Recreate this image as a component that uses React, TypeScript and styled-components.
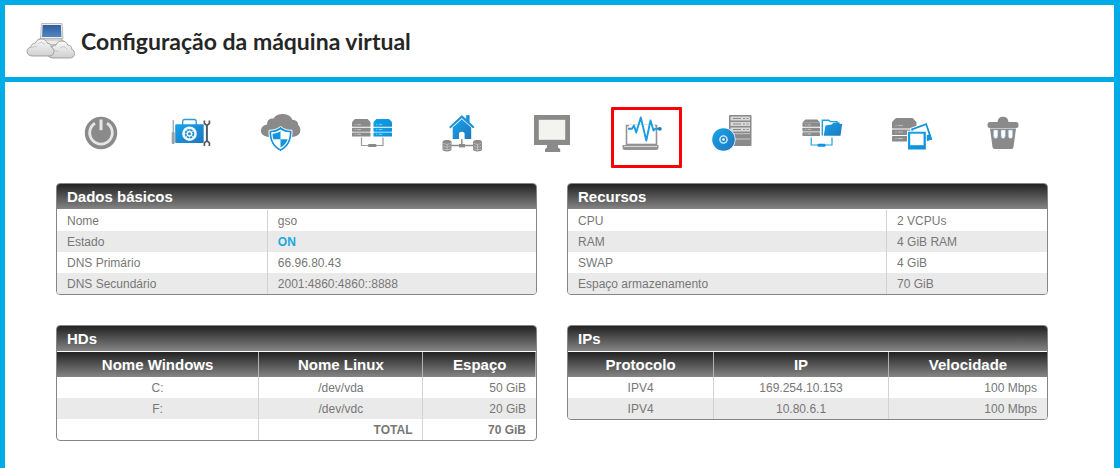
import React from 'react';
import styled, { createGlobalStyle } from 'styled-components';

const blue = '#00ace6';
const gray = '#8a8a8a';

const GlobalStyle = createGlobalStyle`
  *, *::before, *::after { box-sizing: border-box; }
  body {
    margin: 0;
    background: #fff;
    color: #777;
    font-family: "Liberation Sans", Arial, sans-serif;
    font-size: 12px;
  }
`;

const Page = styled.div`
  min-height: 100vh;
  border: solid ${blue};
  border-width: 5px 6px 0 5px;
`;

const Header = styled.header`
  display: flex;
  align-items: center;
  gap: 4px;
  height: 77px;
  padding: 0 20px;
  border-bottom: 5px solid ${blue};
`;

const Title = styled.h1`
  margin: 0;
  color: #262626;
  font-family: Lato, "Liberation Sans", sans-serif;
  font-size: 23px;
  font-weight: 700;
  line-height: 32px;
`;

const Content = styled.main`
  display: flex;
  flex-direction: column;
  gap: 30px;
  padding: 31px 66px 20px 51px;
`;

const Toolbar = styled.nav`
  display: grid;
  grid-template-columns: repeat(11, 1fr);
  justify-items: center;
`;

const ToolButton = styled.button`
  position: relative;
  width: 40px;
  height: 40px;
  padding: 0;
  border: 0;
  background: none;
  cursor: pointer;
`;

const Highlight = styled.span`
  position: absolute;
  top: -6px;
  left: -11px;
  width: 71px;
  height: 61px;
  border: 3px solid #fb0007;
  border-radius: 1px;
  pointer-events: none;
`;

const Icon = styled.svg`
  display: block;
  overflow: visible;
`;

const Gradients = styled.svg`
  position: absolute;
`;

const Panels = styled.div`
  display: grid;
  grid-template-columns: repeat(2, 1fr);
  align-items: start;
  gap: 30px;
`;

const Panel = styled.section`
  overflow: hidden;
  border: 1px solid #858585;
  border-radius: 4px;
`;

const PanelTitle = styled.h2`
  margin: 0;
  padding: 0 10px;
  border-bottom: 1px solid #fff;
  background: linear-gradient(#222, #858585) padding-box;
  color: #fff;
  font-size: 15px;
  font-weight: 700;
  line-height: 25px;
`;

const Table = styled.table`
  width: 100%;
  border-collapse: separate;
  border-spacing: 0;
  table-layout: fixed;
`;

const Row = styled.tr`
  height: 21px;
  &:nth-child(even) { background: #eaeaea; }
`;

const Cell = styled.td<{ $align?: string; $strong?: boolean; $on?: boolean }>`
  padding: 2px 10px 0;
  border-left: 1px solid #d2d2d2;
  color: ${p => (p.$on ? '#1ba8e0' : '#777')};
  font-weight: ${p => (p.$strong || p.$on ? 700 : 400)};
  line-height: 19px;
  text-align: ${p => p.$align || 'left'};
  &:first-child { border-left: 0; }
`;

const HeadRow = styled.tr`
  background: linear-gradient(#222, #858585);
`;

const HeadCell = styled.th`
  padding: 0 10px;
  border-left: 1px solid #b4b4b4;
  color: #fff;
  font-size: 15px;
  line-height: 25px;
  text-align: center;
  &:first-child { border-left: 0; }
`;

const RowLabel = styled(Cell).attrs({ as: 'th', scope: 'row' })``;

type Pair = { label: string; value: string; on?: boolean };

function FactsPanel({ title, split, rows }: { title: string; split: string; rows: Pair[] }) {
  return (
    <Panel aria-label={title}>
      <PanelTitle>{title}</PanelTitle>
      <Table>
        <colgroup>
          <col width={split} />
          <col />
        </colgroup>
        <tbody>
          {rows.map(r => (
            <Row key={r.label}>
              <RowLabel>{r.label}</RowLabel>
              <Cell $on={r.on}>{r.value}</Cell>
            </Row>
          ))}
        </tbody>
      </Table>
    </Panel>
  );
}

type GridProps = { title: string; heads: string[]; widths: string[]; rows: string[][]; total?: string };

function GridPanel({ title, heads, widths, rows, total }: GridProps) {
  return (
    <Panel aria-label={title}>
      <PanelTitle>{title}</PanelTitle>
      <Table>
        <colgroup>
          {widths.map((w, i) => <col key={i} width={w} />)}
          <col />
        </colgroup>
        <thead>
          <HeadRow>
            {heads.map(h => <HeadCell key={h} scope="col">{h}</HeadCell>)}
          </HeadRow>
        </thead>
        <tbody>
          {rows.map(r => (
            <Row key={r.join()}>
              <Cell $align="center">{r[0]}</Cell>
              <Cell $align="center">{r[1]}</Cell>
              <Cell $align="right">{r[2]}</Cell>
            </Row>
          ))}
          {total && (
            <Row>
              <Cell />
              <Cell $align="right" $strong>TOTAL</Cell>
              <Cell $align="right" $strong>{total}</Cell>
            </Row>
          )}
        </tbody>
      </Table>
    </Panel>
  );
}

function Stack({ x, y, w, h, fill }: { x: number; y: number; w: number; h: number; fill: string }) {
  const top = h * 0.17;
  const unit = (h - top) / 3;
  return (
    <g transform={`translate(${x} ${y})`} fill={fill}>
      <path d={`M${w * 0.16} 0H${w * 0.84}L${w} ${top}H0Z`} />
      {[0, 1, 2].map(i => (
        <g key={i}>
          <rect x="0" y={top + i * unit + (i ? 0.9 : 0)} width={w} height={unit - (i ? 0.9 : 0)} rx="0.6" />
          <path d={`M${w * 0.14} ${top + (i + 0.55) * unit}h1.2m1.4 0h${w * 0.2}`} stroke="#fff" strokeOpacity="0.6" strokeWidth="0.8" />
        </g>
      ))}
    </g>
  );
}

function Drum({ x }: { x: number }) {
  return (
    <g transform={`translate(${x} 27)`}>
      <path d="M0 2C0-.6 9-.6 9 2V9.500C9 12 0 12 0 9.500Z" fill={gray} />
      <path d="M.5 3.200C2 4.600 7 4.600 8.500 3.200M.5 6C2 7.400 7 7.400 8.500 6M.5 8.600C2 10 7 10 8.500 8.600M4.500 4V10.500" fill="none" stroke="#d8d8d8" strokeWidth=".6" />
    </g>
  );
}

const tools: { label: string; active?: boolean; art: React.ReactNode }[] = [
  {
    label: 'Ligar ou desligar',
    art: (
      <>
        <circle cx="20" cy="20" r="16.200" fill={gray} />
        <path d="M14 10.200A11.300 11.300 0 1 0 26 10.200" fill="none" stroke="#e6e6e6" strokeWidth="2.800" />
        <path d="M20 6.500V17.200" stroke="#e6e6e6" strokeWidth="3" />
      </>
    ),
  },
  {
    label: 'Ferramentas',
    art: (
      <g transform="translate(-1.300 0)">
        <path d="M13 12V8.500Q13 6.500 15 6.500H24.500Q26.500 6.500 26.500 8.500V12" fill="none" stroke="#2a9bdc" strokeWidth="1.300" />
        <rect x="5.500" y="11.300" width="28.500" height="18.700" rx="1" fill="url(#tb-blue)" />
        <circle cx="19.800" cy="20.700" r="7.300" fill="#f4faff" />
        <circle cx="19.800" cy="20.700" r="3.900" fill="none" stroke="#2390d4" strokeWidth="1.800" strokeDasharray="2.500 .6" />
        <circle cx="19.800" cy="20.700" r="1.500" fill="#2390d4" />
        <path d="M3.500 7V19" stroke="#80888e" strokeWidth="1" />
        <rect x="2" y="19" width="3" height="12" rx="1" fill="#9aa0a4" />
        <path d="M37.200 12V28" stroke="#4f5c66" strokeWidth="2" />
        <path d="M34.700 7.500V10.500L37.200 12.500 39.700 10.500V7.500M34.700 33V29.800L37.200 27.800 39.700 29.800V33" fill="none" stroke="#4f5c66" strokeWidth="1.700" />
      </g>
    ),
  },
  {
    label: 'Firewall',
    art: (
      <>
        <path d="M7.500 24C1.500 23-1 20 .2 16 1 13 4 11.800 6 11.500 6 7 9 5 12.500 5.500 14.500 2 18 .9 22 .9 27 1 30.500 3.500 31.500 7 35 6.800 37.500 9 37.200 12 40 14 40.200 20 37 22 35 23.500 32 24 30 24Z" fill={gray} />
        <path d="M19.500 13.500C15.500 16.700 12 17.300 8 17.300 7.600 27.500 11.500 34.500 19.500 38.500 27.500 34.500 31.400 27.500 31 17.300 27 17.300 23.500 16.700 19.500 13.500Z" fill="#1593dc" stroke="#fff" strokeWidth="1" />
        <path d="M19.500 16.500C16.500 18.600 13.500 19.200 10.200 19.300 10.200 27 13 32.500 19.500 36.200 26 32.500 28.800 27 28.800 19.300 25.500 19.200 22.500 18.600 19.500 16.500Z" fill="#fff" />
        <path d="M19.500 18.200C17 19.700 14.500 20.500 11.500 20.700Q11.600 23.800 12.300 26.200H19.500ZM19.500 26.200H26.700Q25 31.500 19.500 34.600Z" fill="#1593dc" />
      </>
    ),
  },
  {
    label: 'Migrar servidor',
    art: (
      <>
        <Stack x={0} y={6} w={18.5} h={17.5} fill={gray} />
        <Stack x={21.5} y={6} w={18.5} h={17.5} fill="url(#tb-sky)" />
        <path d="M9.500 24.500V32.500H31V24.500" fill="none" stroke="#9a9a9a" strokeWidth="1.200" />
        <rect x="16" y="31" width="8.500" height="3" rx="1" fill={gray} />
      </>
    ),
  },
  {
    label: 'Rede interna',
    art: (
      <>
        <path d="M19.800 2.500 7.500 14 8.600 15 19.800 4.800 31 15 32.200 14 27.200 9.200V2.500H24.300V6.600Z" fill="#188fd6" stroke="#188fd6" strokeWidth=".7" />
        <path d="M19.800 6.300 10.700 14.500V26H17V20.800Q17 18.800 19.800 18.800 22.600 18.800 22.600 20.800V26H29.200V14.500Z" fill="url(#tb-blue)" />
        <path d="M19.800 26V32.500M9 32.500H31" stroke={gray} strokeWidth="1.400" />
        <rect x="17" y="31" width="6" height="3.400" fill={gray} />
        <Drum x={0.5} />
        <Drum x={31} />
      </>
    ),
  },
  {
    label: 'Console',
    art: (
      <>
        <rect x="2" y="2" width="36" height="30" rx=".6" fill={gray} />
        <rect x="6.800" y="6.800" width="26.400" height="20" fill="#f3f4f0" />
        <path d="M15 32H26V34.500L28.200 36V39H13V36L15 34.500Z" fill={gray} />
      </>
    ),
  },
  {
    label: 'Monitoramento',
    active: true,
    art: (
      <>
        <rect x="4.500" y="12.500" width="30" height="19" fill="#fff" stroke="#949494" strokeWidth="1.600" />
        <path d="M.5 32H36.500V34.500Q36.500 37 34 37H3Q.5 37 .5 34.500Z" fill="#959595" />
        <path d="M2 33.500H35" stroke="#d8d8d8" strokeWidth="1" />
        <path d="M7 15.800H33" stroke="#fff" strokeWidth="8" />
        <path d="M6 15.800H10L12 12.500 14.200 19.500 18.800 4.500 24.300 27.500 28.500 7.500 31.500 17.500 33 15.800H37" fill="none" stroke="#1c9ddd" strokeWidth="1.900" strokeLinejoin="round" />
        <circle cx="37.800" cy="15.800" r="1.900" fill="#157fc0" />
      </>
    ),
  },
  {
    label: 'Reinstalar sistema',
    art: (
      <g transform="translate(1 0)">
        <rect x="16" y="2" width="22.500" height="31" rx=".8" fill={gray} />
        {[3.5, 9, 14.5].map(y => (
          <g key={y}>
            <rect x="17.500" y={y} width="19.500" height="4" fill="#d9d9d9" />
            <path d={`M20 ${y + 2}h8m2 0h2m1.500 0h2`} stroke={gray} strokeWidth="1.200" />
          </g>
        ))}
        <path d="M17.500 20.700H37M17.500 26H37" stroke="#c9c9c9" strokeWidth="1" />
        <circle cx="10.500" cy="26.500" r="12" fill="#fff" />
        <circle cx="10.500" cy="26.500" r="11.300" fill="url(#tb-blue)" />
        <circle cx="10.500" cy="26.500" r="3.600" fill="none" stroke="#dff1fb" strokeWidth="1.400" />
        <circle cx="10.500" cy="26.500" r="1.300" fill="#fff" />
      </g>
    ),
  },
  {
    label: 'Backup de arquivos',
    art: (
      <g transform="translate(-.500 0)">
        <Stack x={0} y={6.5} w={17.5} h={16.5} fill={gray} />
        <path d="M19.800 22.500V7.300H26L28 8.600H34.500V11" fill="none" stroke="#1da2e2" strokeWidth="1.400" />
        <path d="M23 12.500 29 11.500 31 9.800 37 9.200 37.200 11 39.700 10.700 38 22.800H21.200Z" fill="url(#tb-blue)" />
        <path d="M8.700 24.500V32H29.500V24.500" fill="none" stroke="#1da2e2" strokeWidth="1.200" />
        <rect x="15" y="30.700" width="8" height="3" rx="1" fill="#1593dc" />
      </g>
    ),
  },
  {
    label: 'Snapshots',
    art: (
      <g transform="translate(-1 0)">
        <Stack x={0} y={5} w={24.5} h={23.500} fill={gray} />
        <path d="M18.300 15.500 35 9.400 41 26.800 24 32Z" fill="#1593dc" stroke="#fff" strokeWidth="1" />
        <path d="M20.900 16.900 33.700 12.300 36.700 21.500 24 26Z" fill="#fff" />
        <rect x="15.500" y="18.200" width="18.800" height="18.800" fill="url(#tb-sky)" stroke="#fff" strokeWidth="1" />
        <rect x="18.200" y="20.700" width="13.400" height="11.500" fill="#fff" />
      </g>
    ),
  },
  {
    label: 'Excluir máquina',
    art: (
      <>
        <path d="M14.500 9Q15 3.700 20 3.700T25.500 9Z" fill={gray} />
        <rect x="4.500" y="9" width="31" height="6" rx="2.500" fill={gray} />
        <path d="M7 15.500H33L30.500 34Q30.200 36 28.500 36H11.500Q9.800 36 9.500 34Z" fill={gray} />
        {[10.5, 18, 25.300].map(x => (
          <path key={x} d={`M${x} 17h4.400v5.500q0 3-2.200 3t-2.200-3z`} fill="#fff" stroke="#7fb2d6" strokeWidth=".5" />
        ))}
      </>
    ),
  },
];

function CloudLogo() {
  const bumps =
    'M6 17.500C2.500 17.500 .5 15.500 .5 13 .5 10.500 2 9 4.500 8.800 4.500 6 6.500 4.500 8.800 4.700 9.800 1.800 12.500.5 15 .5 18 .5 20 2.200 20.800 4.700 23.500 4.700 25 6.500 24.800 8.800 26.800 9.500 27.500 11.200 27.500 13 27.500 15.800 25.500 17.500 23 17.500Z';
  return (
    <Icon width="52" height="40" viewBox="0 0 52 40" aria-hidden="true">
      <defs>
        <linearGradient id="cloud" x1="0" y1="0" x2="0" y2="1">
          <stop offset="0" stopColor="#fafafa" />
          <stop offset="1" stopColor="#cfcfcf" />
        </linearGradient>
        <linearGradient id="screen" x1="0" y1="0" x2="0" y2="1">
          <stop offset="0" stopColor="#2e5f9e" />
          <stop offset="1" stopColor="#5585c0" />
        </linearGradient>
      </defs>
      <g fill="url(#cloud)" stroke="#999" strokeWidth=".9">
        <path d={bumps} transform="translate(11 9)" />
        <path d="M16.500 2.500H37L38 17.500H15.500Z" fill="#eee" stroke="#b5b5b5" />
        <path d="M18 19H37L42 23.500H22Z" fill="#ececec" stroke="#bbb" />
        <path d={bumps} transform="translate(22 19.500)" />
        <path d={bumps} transform="translate(1.500 17.500)" />
      </g>
      <path d="M17.700 4H35.800L36.500 16H17Z" fill="url(#screen)" />
      <path d="M7 27Q9 23.500 12 26M13 23Q16 19.500 20 23.500M28 31Q31 28 34 31M35 27Q39 24 42 28" fill="none" stroke="#bcbcbc" strokeWidth=".8" />
    </Icon>
  );
}

export default function App() {
  return (
    <Page>
      <GlobalStyle />
      <Gradients width="0" height="0" aria-hidden="true">
        <defs>
          <linearGradient id="tb-blue" x1="0" y1="0" x2="1" y2="1">
            <stop offset="0" stopColor="#16a4ea" />
            <stop offset="1" stopColor="#1f77bd" />
          </linearGradient>
          <linearGradient id="tb-sky" x1="0" y1="0" x2="1" y2="1">
            <stop offset="0" stopColor="#08a6ee" />
            <stop offset="1" stopColor="#1489d6" />
          </linearGradient>
        </defs>
      </Gradients>
      <Header>
        <CloudLogo />
        <Title>Configuração da máquina virtual</Title>
      </Header>
      <Content>
        <Toolbar>
          {tools.map(t => (
            <ToolButton key={t.label} type="button" aria-label={t.label}>
              <Icon width="40" height="40" viewBox="0 0 40 40" aria-hidden="true">{t.art}</Icon>
              {t.active && <Highlight />}
            </ToolButton>
          ))}
        </Toolbar>
        <Panels>
          <FactsPanel
            title="Dados básicos"
            split="43.8%"
            rows={[
              { label: 'Nome', value: 'gso' },
              { label: 'Estado', value: 'ON', on: true },
              { label: 'DNS Primário', value: '66.96.80.43' },
              { label: 'DNS Secundário', value: '2001:4860:4860::8888' },
            ]}
          />
          <FactsPanel
            title="Recursos"
            split="66.4%"
            rows={[
              { label: 'CPU', value: '2 VCPUs' },
              { label: 'RAM', value: '4 GiB RAM' },
              { label: 'SWAP', value: '4 GiB' },
              { label: 'Espaço armazenamento', value: '70 GiB' },
            ]}
          />
          <GridPanel
            title="HDs"
            heads={['Nome Windows', 'Nome Linux', 'Espaço']}
            widths={['42%', '34.3%']}
            rows={[
              ['C:', '/dev/vda', '50 GiB'],
              ['F:', '/dev/vdc', '20 GiB'],
            ]}
            total="70 GiB"
          />
          <GridPanel
            title="IPs"
            heads={['Protocolo', 'IP', 'Velocidade']}
            widths={['30.3%', '36.5%']}
            rows={[
              ['IPV4', '169.254.10.153', '100 Mbps'],
              ['IPV4', '10.80.6.1', '100 Mbps'],
            ]}
          />
        </Panels>
      </Content>
    </Page>
  );
}
